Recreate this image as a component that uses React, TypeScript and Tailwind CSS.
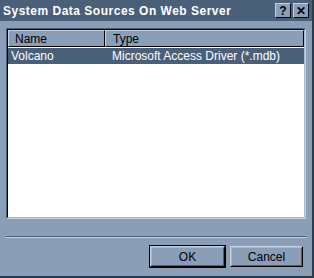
import React from 'react';

const face = 'bg-[#8a9fb7]';

function TitleButton({label}: {label: string}) {
  return (
    <div className="flex h-[15px] w-[16px] items-center justify-center border border-t-[#c4d2e0] border-l-[#c4d2e0] border-r-black border-b-black bg-[#8a9fb7] text-[12px] font-bold leading-none text-black">
      {label}
    </div>
  );
}

function PushButton({label, isDefault}: {label: string; isDefault?: boolean}) {
  return (
    <div className={isDefault ? 'border border-black' : 'border border-transparent'}>
      <div className="border border-t-[#c4d2e0] border-l-[#c4d2e0] border-r-black border-b-black">
        <div className="flex h-[19px] items-center justify-center border border-t-[#a8b8ca] border-l-[#a8b8ca] border-r-[#4c6078] border-b-[#4c6078] pt-[1px] text-[12px] text-black">
          {label}
        </div>
      </div>
    </div>
  );
}

export default function App(): JSX.Element {
  return (
    <div
      className={`flex h-[278px] w-[314px] flex-col ${face} border-r-2 border-b-2 border-r-[#2c3a4a] border-b-[#2c3a4a]`}
      style={{fontFamily: '"Liberation Sans", Arial, sans-serif'}}
    >
      {/* title bar */}
      <div className="flex h-[21px] items-center justify-between bg-[#4a6079] pl-[3px] pr-[3px]">
        <span className="text-[12px] font-bold tracking-[0.5px] text-white">
          System Data Sources On Web Server
        </span>
        <div className="flex gap-[2px]">
          <TitleButton label="?" />
          <TitleButton label="✕" />
        </div>
      </div>

      {/* list */}
      <div className="ml-[6px] mr-[6px] mt-[7px] h-[191px] border border-t-[#4c6078] border-l-[#4c6078] border-r-[#c4d2e0] border-b-[#c4d2e0]">
        <div className="h-full border border-t-black border-l-black border-r-[#a8b8ca] border-b-[#a8b8ca] bg-white">
          <div className="flex h-[17px] text-[12px] text-black">
            <div className="flex w-[97px] items-center border border-t-[#c4d2e0] border-l-[#c4d2e0] border-r-black border-b-black bg-[#8a9fb7] pl-[6px] pt-[1px]">
              Name
            </div>
            <div className="flex flex-1 items-center border border-t-[#c4d2e0] border-l-[#c4d2e0] border-r-black border-b-black bg-[#8a9fb7] pl-[7px] pt-[1px]">
              Type
            </div>
          </div>
          <div className="mt-[1px] flex h-[16px] items-center bg-[#4a6079] text-[12px] text-white">
            <span className="w-[104px] pl-[3px]">Volcano</span>
            <span>Microsoft Access Driver (*.mdb)</span>
          </div>
        </div>
      </div>

      {/* separator */}
      <div className="ml-[6px] mr-[6px] mt-[17px] border-t border-b border-t-[#4c6078] border-b-[#c4d2e0]" />

      {/* buttons */}
      <div className="mt-[7px] flex justify-end gap-[3px] pr-[8px]">
        <div className="w-[77px]">
          <PushButton label="OK" isDefault />
        </div>
        <div className="w-[75px]">
          <PushButton label="Cancel" />
        </div>
      </div>
    </div>
  );
}
